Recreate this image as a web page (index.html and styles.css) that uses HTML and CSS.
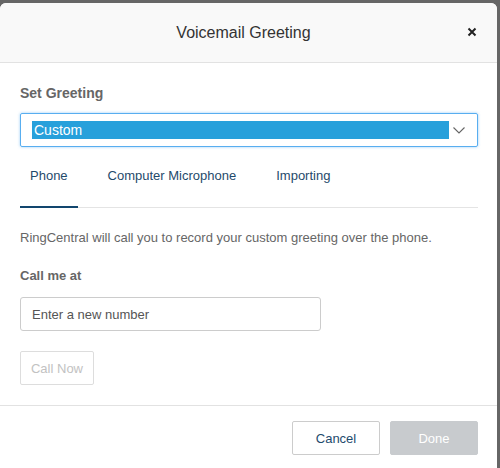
FILE: index.html
```html
<!DOCTYPE html>
<html>
<head>
<meta charset="utf-8">
<link rel="stylesheet" href="styles.css">
</head>
<body>
<div class="dialog">
  <div class="header">
    <span></span>
    <h1 class="title">Voicemail Greeting</h1>
    <button class="close" aria-label="Close">
      <svg width="10" height="10" viewBox="0 0 10 10"><path d="M1.5 1.5 L8.5 8.5 M8.5 1.5 L1.5 8.5" stroke="#222" stroke-width="2" fill="none"/></svg>
    </button>
  </div>
  <div class="body">
    <div class="label big">Set Greeting</div>
    <div class="select">
      <span class="selected">Custom</span>
      <svg class="chev" width="12" height="7" viewBox="0 0 12 7"><path d="M0.5 0.5 L6 6 L11.5 0.5" stroke="#666" stroke-width="1.1" fill="none"/></svg>
    </div>
    <div class="tabs">
      <div class="tab active">Phone</div>
      <div class="tab">Computer Microphone</div>
      <div class="tab">Importing</div>
    </div>
    <p class="desc">RingCentral will call you to record your custom greeting over the phone.</p>
    <div class="label">Call me at</div>
    <div class="input">Enter a new number</div>
    <button class="btn disabled">Call Now</button>
  </div>
  <div class="footer">
    <button class="btn cancel">Cancel</button>
    <button class="btn done">Done</button>
  </div>
</div>
</body>
</html>
```

FILE: styles.css
```css
html, body {
  margin: 0;
  padding: 0;
  background: #666666;
  height: 100%;
  overflow: hidden;
}
body {
  font-family: "Liberation Sans", Arial, sans-serif;
  padding-top: 3px;
}
.dialog {
  width: 497px;
  background: #ffffff;
  border-radius: 6px 6px 0 0;
  overflow: hidden;
  min-height: 480px;
}
.header {
  height: 59px;
  background: #f9f9f9;
  border-bottom: 1px solid #e2e2e2;
  display: grid;
  grid-template-columns: 1fr auto 1fr;
  align-items: center;
}
.title {
  margin: 0;
  font-size: 16px;
  font-weight: normal;
  color: #333333;
  padding-right: 10px;
}
.close {
  justify-self: end;
  margin-right: 20px;
  border: 0;
  background: none;
  padding: 0;
  width: 10px;
  height: 10px;
  display: flex;
  margin-top: -2px;
}
.body {
  padding: 20px 19px 20px 20px;
  border-bottom: 1px solid #e2e2e2;
}
.label {
  font-size: 13px;
  font-weight: bold;
  color: #666666;
  line-height: 18px;
}
.label.big {
  font-size: 14px;
  line-height: 20px;
}
.select {
  margin-top: 10px;
  height: 32px;
  border: 1px solid #58aef0;
  border-radius: 2px;
  box-shadow: 0 0 3px rgba(88, 174, 240, 0.6);
  display: flex;
  align-items: center;
  padding: 0 12px 0 11px;
  gap: 4px;
}
.selected {
  flex: 1;
  background: #27a0db;
  color: #ffffff;
  font-size: 14px;
  line-height: 18px;
  padding-left: 2px;
}
.chev {
  flex: none;
  margin-top: 1px;
}
.tabs {
  margin-top: 8px;
  display: flex;
  gap: 20px;
  border-bottom: 1px solid #e4e4e4;
}
.tab {
  padding: 11px 10px 20px;
  font-size: 13px;
  line-height: 20px;
  color: #1f4a6b;
  margin-bottom: -1px;
  border-bottom: 2px solid transparent;
}
.tab.active {
  border-bottom-color: #12466e;
}
.desc {
  margin: 21px 0 20px;
  font-size: 13px;
  line-height: 18px;
  color: #666666;
}
.input {
  margin-top: 12px;
  border: 1px solid #cccccc;
  border-radius: 3px;
  display: flex;
  align-items: center;
  padding-left: 11px;
  box-sizing: border-box;
  height: 34px;
  width: 301px;
  font-size: 13px;
  color: #555555;
}
.btn {
  font-family: "Liberation Sans", Arial, sans-serif;
  font-size: 13px;
  height: 34px;
  border-radius: 2px;
  background: #ffffff;
  border: 1px solid #cccccc;
  padding: 0;
  display: block;
}
.btn.disabled {
  margin-top: 20px;
  width: 74px;
  color: #c2c2c2;
  border-color: #dddddd;
}
.footer {
  display: flex;
  justify-content: flex-end;
  gap: 10px;
  padding: 15px 19px 0 0;
}
.cancel {
  width: 88px;
  color: #1e4b6d;
}
.done {
  width: 88px;
  background: #c8cbce;
  border-color: #c8cbce;
  color: #ffffff;
}
```
